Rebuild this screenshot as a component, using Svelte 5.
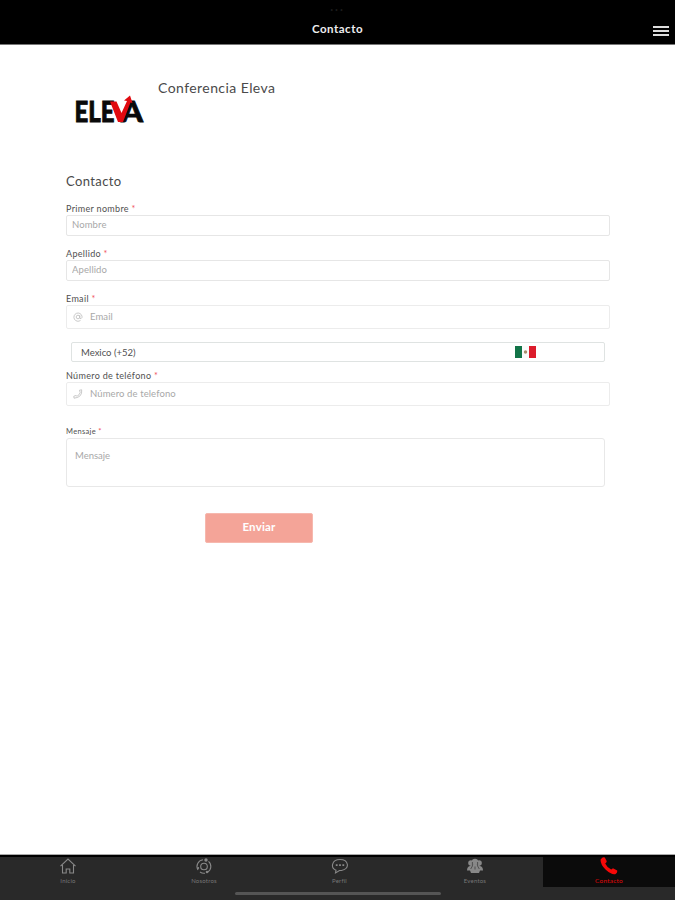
<script>
  let name = $state('')
  let lastName = $state('')
  let email = $state('')
  let phone = $state('')
  let message = $state('')
  let active = $state('contacto')

  const tabs = [
    { id: 'inicio', title: 'Inicio' },
    { id: 'nosotros', title: 'Nosotros' },
    { id: 'perfil', title: 'Perfil' },
    { id: 'eventos', title: 'Eventos' },
    { id: 'contacto', title: 'Contacto' }
  ]
</script>

<div class="screen">
  <header>
    <span class="dots">•••</span>
    <h1>Contacto</h1>
    <button class="menu" aria-label="Menu"><i></i><i></i><i></i></button>
  </header>

  <main>
    <div class="brand">
      <svg class="logo" width="72" height="34" viewBox="0 0 72 34">
        <text x="0.500" y="29.500" textLength="40" lengthAdjust="spacingAndGlyphs">ELE</text>
        <text x="47" y="29.500" textLength="22" lengthAdjust="spacingAndGlyphs">A</text>
        <path d="M36 9.500h6.500l5 11.500 5.500-12-3-.5 6-5 2.500 7.500-2-.5-7.500 19.500h-5z" fill="#e00a10" />
      </svg>
      <h2>Conferencia Eleva</h2>
    </div>

    <form>
      <h3>Contacto</h3>

      <label for="name">Primer nombre <b>*</b></label>
      <div class="box"><input id="name" placeholder="Nombre" bind:value={name} /></div>

      <label class="next" for="last">Apellido <b>*</b></label>
      <div class="box"><input id="last" placeholder="Apellido" bind:value={lastName} /></div>

      <label class="next" for="email">Email <b>*</b></label>
      <div class="box tall">
        <svg class="ico" width="10" height="10" viewBox="0 0 10 10">
          <circle cx="5" cy="5" r="1.8" />
          <path d="M6.800 3.200v2.500q.2 1.200 1.300.8Q9.300 6 9 4.200A4.100 4.100 0 1 0 7.500 8.400" />
        </svg>
        <input id="email" placeholder="Email" bind:value={email} />
      </div>

      <div class="country">
        <span>Mexico (+52)</span>
        <svg class="flag" width="21" height="12" viewBox="0 0 21 12">
          <rect width="21" height="12" fill="#fbfbfb" />
          <rect width="7" height="12" fill="#127448" />
          <rect x="14" width="7" height="12" fill="#dc1c2c" />
          <circle cx="10.500" cy="6" r="1.700" fill="#a98d6b" />
        </svg>
      </div>

      <label for="phone">Número de teléfono <b>*</b></label>
      <div class="box tall">
        <svg class="ico" width="10" height="10" viewBox="0 0 10 10">
          <path d="M6.500 1.200 8.700.8Q9.500 8.500 1 9.200L.8 7.200 3 6.500l1 .8Q6.500 6 7.200 3.500z" />
        </svg>
        <input id="phone" placeholder="Número de telefono" bind:value={phone} />
      </div>

      <label class="small" for="message">Mensaje <b>*</b></label>
      <textarea id="message" placeholder="Mensaje" bind:value={message}></textarea>

      <button class="send" type="button">Enviar</button>
    </form>
  </main>

  <footer>
    <nav>
      {#each tabs as tab}
        <button class="tab" class:active={active === tab.id} onclick={() => (active = tab.id)}>
          <svg width="18" height="18" viewBox="0 0 18 18">
            {#if tab.id === 'inicio'}
              <path d="M1.500 9.200 9 2l7.500 7.200M3.500 8v8h3.700v-4h3.600v4h3.700V8" />
            {:else if tab.id === 'nosotros'}
              <circle cx="9" cy="9.500" r="3.300" />
              <path d="M8 2.700A6.800 6.800 0 0 0 3 13M5 15a6.800 6.800 0 0 0 5 1.200M12.500 15.300A6.800 6.800 0 0 0 13.500 4.300" />
              <circle class="fill" cx="11" cy="3" r="1.700" />
              <circle class="fill" cx="3.200" cy="11" r="1" />
              <circle class="fill" cx="12" cy="15" r="1.300" />
            {:else if tab.id === 'perfil'}
              <path d="M5 13.200C-.7 11 .5 2.500 9 2.500s10.500 9 1.500 11H8.500L4.500 16z" />
              <path class="thick" d="M4.800 8.200h1.800M8.100 8.200h1.800M11.400 8.200h1.800" />
            {:else if tab.id === 'eventos'}
              <g class="fill">
                <circle cx="9" cy="5" r="3.200" />
                <circle cx="4.900" cy="6" r="2.700" />
                <circle cx="13.100" cy="6" r="2.700" />
                <path d="M1 13.500q0-4 3-4.500l1-1h8l1 1q3 .5 3 4.500h-3l-1 2.500H5l-1-2.500z" />
              </g>
              <path class="cut" d="M6.400 5v4L4.700 12M11.600 5v4l1.700 3M9 9.500v3" />
            {:else}
              <path class="fill" d="M1.500 1.500Q3-.2 4.800.4L6.800 4.200Q6.600 5.500 5.200 6.400 7 10.300 11.200 12.500L13 11.200 17.200 13.500Q17.700 16 15.200 17.200 11.500 18 5.500 12.500.2 7 .6 2.500z" />
            {/if}
          </svg>
          <span>{tab.title}</span>
        </button>
      {/each}
    </nav>
    <div class="indicator"></div>
  </footer>
</div>

<style>
  :global(body) {
    margin: 0;
    background: #fff;
  }
  .screen, .screen * {
    box-sizing: border-box;
  }
  .screen {
    height: 900px;
    display: flex;
    flex-direction: column;
    font-family: Lato, 'Open Sans', sans-serif;
    color: #505050;
  }
  button, input, textarea {
    font-family: inherit;
    padding: 0;
    border: 0;
    outline: 0;
    background: none;
  }
  h1, h2, h3 {
    margin: 0;
    font-weight: 400;
  }
  header {
    height: 45px;
    background: #000;
    border-bottom: 1px solid #777;
    display: grid;
    grid-template-columns: 1fr auto 1fr;
    grid-template-rows: 19px 20px;
    align-items: center;
  }
  .dots {
    grid-column: 2;
    color: #1c1c1c;
    font-size: 5px;
    letter-spacing: 2px;
    text-align: center;
  }
  h1 {
    grid-column: 2;
    grid-row: 2;
    color: #eee;
    font-size: 11.5px;
    font-weight: 700;
    letter-spacing: .5px;
    line-height: 20px;
  }
  .menu {
    grid-column: 3;
    grid-row: 2;
    justify-self: end;
    width: 16px;
    margin: 4px 6px 0 0;
    display: grid;
    gap: 2px;
  }
  .menu i {
    height: 2px;
    background: #ddd;
  }
  main {
    flex: 1;
    padding: 34px 65px 0 66px;
  }
  .brand {
    display: flex;
    height: 93px;
  }
  .logo {
    margin: 13px 12px 0 8px;
  }
  .logo text {
    font-family: Lato, sans-serif;
    font-weight: 900;
    font-size: 28px;
    fill: #0a0a0a;
    stroke: #0a0a0a;
    stroke-width: .8;
  }
  h2 {
    font-size: 14px;
    line-height: 18px;
    letter-spacing: .43px;
    color: #4a4a4a;
  }
  form {
    display: flex;
    flex-direction: column;
  }
  h3 {
    font-size: 13px;
    line-height: 18px;
    height: 30px;
    letter-spacing: .4px;
    color: #4a4a4a;
  }
  label {
    height: 13px;
    line-height: 13px;
    font-size: 9px;
    letter-spacing: .32px;
  }
  label b {
    color: #f0525c;
    font-weight: 400;
  }
  .next {
    margin-top: 11px;
  }
  .box {
    display: flex;
    align-items: center;
    height: 21px;
    padding-left: 5px;
    border: 1px solid #e6e6e6;
    border-radius: 2px;
  }
  .tall {
    height: 24px;
    border-color: #ececec;
  }
  .box input {
    flex: 1;
    height: 14px;
    margin-bottom: 2px;
    font-size: 9.5px;
    letter-spacing: .1px;
  }
  .ico {
    margin: 0 7px 0 1px;
    fill: none;
    stroke: #bbb;
    stroke-width: .8;
  }
  input::placeholder, textarea::placeholder {
    color: #a8a8a8;
    opacity: 1;
  }
  .country {
    display: flex;
    align-items: center;
    height: 20px;
    margin: 13px 5px 7px;
    padding: 0 68px 0 9px;
    border: 1px solid #dfe3e2;
    border-radius: 2px;
    font-size: 9.5px;
  }
  .flag {
    margin-left: auto;
  }
  .small {
    margin-top: 19px;
    font-size: 7.5px;
  }
  textarea {
    height: 49px;
    margin-right: 5px;
    padding: 11px 8px;
    border: 1px solid #e8e8e8;
    border-radius: 3px;
    resize: none;
    font-size: 9.5px;
    line-height: 12px;
  }
  .send {
    width: 108px;
    height: 30px;
    margin: 26px 0 0 139px;
    padding-bottom: 3px;
    background: #f4a498;
    border: 1px solid #f6b8ae;
    border-radius: 2px;
    color: #fff;
    font-size: 11.5px;
    font-weight: 700;
    letter-spacing: .2px;
  }
  footer {
    height: 46px;
    background: #292929;
    border-top: 1px solid #aaa;
  }
  nav {
    display: grid;
    grid-template-columns: 136px 136px 135px 136px 1fr;
    height: 32px;
    border-top: 2px solid #000;
  }
  .tab {
    display: flex;
    flex-direction: column;
    align-items: center;
    color: #888;
  }
  .tab svg {
    fill: none;
    stroke: currentColor;
    stroke-width: 1.1;
    flex: none;
  }
  .tab .fill {
    fill: currentColor;
    stroke: none;
  }
  .tab .thick {
    stroke-width: 1.8;
  }
  .tab .cut {
    stroke: #292929;
    stroke-width: .6;
  }
  .tab span {
    margin-top: 2px;
    font-size: 6px;
    line-height: 7px;
    letter-spacing: .2px;
    color: #777;
  }
  .active {
    background: #0b0b0b;
    color: #f60808;
  }
  .active span {
    font-size: 6.5px;
    color: #e00808;
  }
  .indicator {
    width: 206px;
    height: 3px;
    margin: 5px 0 0 235px;
    border-radius: 2px;
    background: #555;
  }
</style>
